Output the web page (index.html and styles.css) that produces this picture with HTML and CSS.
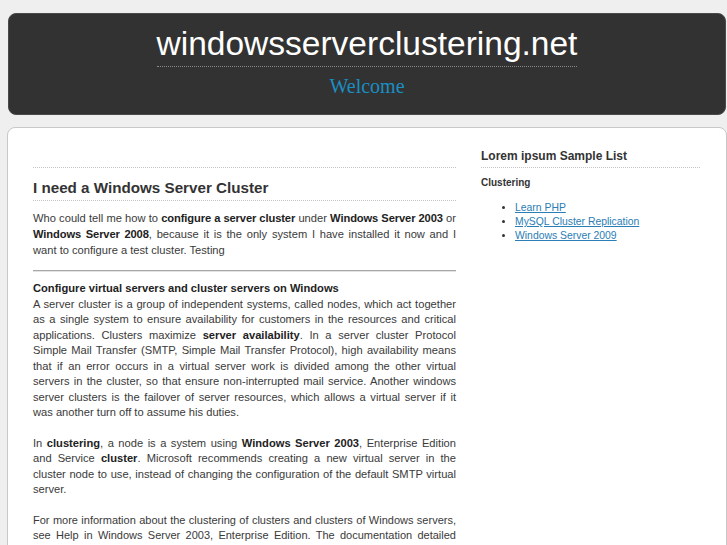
FILE: index.html
```html
<!DOCTYPE html>
<html lang="en">
<head>
<meta charset="utf-8">
<title>windowsserverclustering.net</title>
<link rel="stylesheet" href="styles.css">
</head>
<body>
<header class="site-header">
  <h1 class="site-title">windowsserverclustering.net</h1>
  <div class="site-tagline">Welcome</div>
</header>
<div class="content">
  <main class="main">
    <div class="main-top"></div>
    <h2 class="post-title">I need a Windows Server Cluster</h2>
    <p class="intro">Who could tell me how to <b>configure a server cluster</b> under <b>Windows Server 2003</b> or <b>Windows Server 2008</b>, because it is the only system I have installed it now and I want to configure a test cluster. Testing</p>
    <hr class="rule">
    <p class="para first"><b>Configure virtual servers and cluster servers on Windows</b><br>A server cluster is a group of independent systems, called nodes, which act together as a single system to ensure availability for customers in the resources and critical applications. Clusters maximize <b>server availability</b>. In a server cluster Protocol Simple Mail Transfer (SMTP, Simple Mail Transfer Protocol), high availability means that if an error occurs in a virtual server work is divided among the other virtual servers in the cluster, so that ensure non-interrupted mail service. Another windows server clusters is the failover of server resources, which allows a virtual server if it was another turn off to assume his duties.</p>
    <p class="para">In <b>clustering</b>, a node is a system using <b>Windows Server 2003</b>, Enterprise Edition and Service <b>cluster</b>. Microsoft recommends creating a new virtual server in the cluster node to use, instead of changing the configuration of the default SMTP virtual server.</p>
    <p class="para last">For more information about the clustering of clusters and clusters of Windows servers, see Help in Windows Server 2003, Enterprise Edition. The documentation detailed describes how to create and configure virtual servers on the nodes of a server cluster.</p>
  </main>
  <aside class="sidebar">
    <h2 class="side-title">Lorem ipsum Sample List</h2>
    <h3 class="side-sub">Clustering</h3>
    <ul class="side-list">
      <li><a href="#">Learn PHP</a></li>
      <li><a href="#">MySQL Cluster Replication</a></li>
      <li><a href="#">Windows Server 2009</a></li>
    </ul>
  </aside>
</div>
</body>
</html>
```
FILE: styles.css
```css
html, body {
  margin: 0;
  padding: 0;
  overflow: hidden;
}
body {
  background: #efefef;
  font-family: "Liberation Sans", Arial, sans-serif;
  color: #333;
  padding-top: 13px;
}
.site-header {
  margin: 0 1px 0 8px;
  background: #323232;
  border: 1px solid #4a4a4a;
  border-radius: 8px;
  padding: 11px 0 16px;
  text-align: center;
  box-sizing: border-box;
  height: 102px;
}
.site-title {
  display: inline-block;
  margin: 0;
  font-family: "Liberation Sans", Arial, sans-serif;
  font-weight: normal;
  font-size: 33.5px;
  line-height: 38px;
  color: #fff;
  padding-bottom: 3px;
  border-bottom: 1px dotted #8a8a8a;
}
.site-tagline {
  font-family: "Liberation Serif", "Times New Roman", serif;
  font-size: 20px;
  line-height: 24px;
  color: #1b8ec2;
  margin-top: 7px;
}
.content {
  margin: 12px 0 0 7px;
  background: #fff;
  border: 1px solid #c8c8c8;
  border-radius: 8px 8px 0 0;
  padding: 20px 26px 40px 25px;
  display: flex;
  gap: 25px;
  min-height: 500px;
}
.main {
  width: 423px;
  flex: none;
}
.main-top {
  height: 19px;
  border-bottom: 1px dotted #c4c4c4;
}
.post-title {
  margin: 11px 0 0;
  font-size: 15.2px;
  line-height: 18px;
  font-weight: bold;
  color: #333;
  padding-bottom: 3px;
  border-bottom: 1px dotted #c4c4c4;
}
.intro {
  margin: 9px 0 0;
  font-size: 11.15px;
  line-height: 16px;
  text-align: justify;
  color: #3a3a3a;
}
.intro b {
  letter-spacing: -0.1px;
}
.intro b, .para b {
  color: #222;
}
.rule {
  margin: 12px 0 0;
  height: 0;
  border: 0;
  border-top: 1px solid #a8a8a8;
  border-bottom: 1px solid #e2e2e2;
}
.para {
  margin: 15px 0 0;
  font-size: 11.15px;
  line-height: 15.5px;
  text-align: justify;
  color: #3a3a3a;
}
.para.first {
  margin-top: 9px;
}
.para.last {
  font-size: 11px;
}
.sidebar {
  width: 219px;
  flex: none;
}
.side-title {
  margin: 0;
  font-size: 12px;
  line-height: 16px;
  font-weight: bold;
  color: #333;
  padding-bottom: 3px;
  border-bottom: 1px dotted #c4c4c4;
}
.side-sub {
  margin: 8px 0 0;
  font-size: 10px;
  line-height: 14px;
  font-weight: bold;
  color: #333;
}
.side-list {
  margin: 11px 0 0;
  padding-left: 34px;
  list-style: disc;
  font-size: 10.4px;
  line-height: 14px;
  color: #333;
}
.side-list a {
  color: #2a7db5;
  text-decoration: underline;
}
```
